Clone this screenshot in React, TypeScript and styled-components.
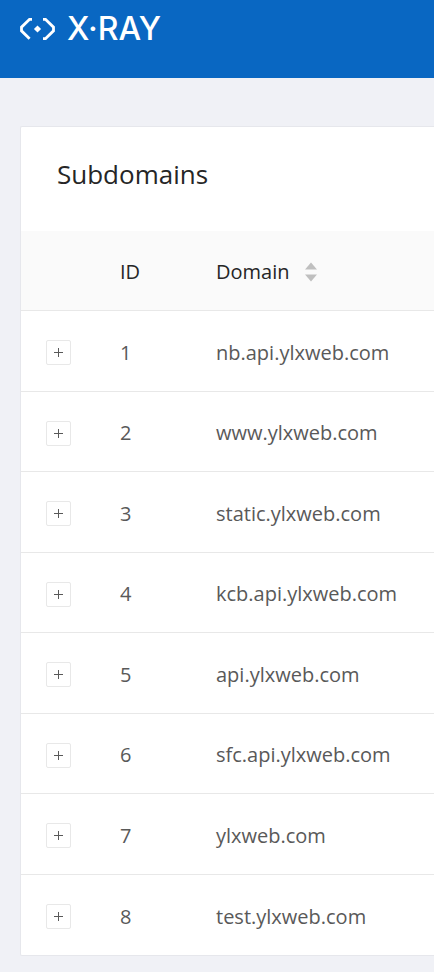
import React, { useState } from "react";
import styled, { createGlobalStyle } from "styled-components";

const GlobalStyle = createGlobalStyle`
  *, *::before, *::after { box-sizing: border-box; }
  body {
    margin: 0;
    background: #f0f1f6;
    color: #595959;
    font-family: "Open Sans", "Noto Sans", sans-serif;
    font-size: 20px;
  }
`;

const Page = styled.div`
  min-height: 100vh;
  overflow-x: hidden;
`;

const TopBar = styled.header`
  height: 78px;
  padding: 12px 20px;
  background: #0967c2;
`;

const Brand = styled.a`
  display: inline-flex;
  align-items: center;
  gap: 12px;
  height: 34px;
  color: #fff;
  text-decoration: none;
`;

const BrandMark = styled.svg`
  display: block;
  width: 35px;
  height: 22px;
`;

const BrandName = styled.span`
  font-family: Inter, "DejaVu Sans", sans-serif;
  font-size: 32px;
  font-weight: 500;
  line-height: 32px;
`;

const Main = styled.main`
  padding: 48px 0 18px 20px;
`;

const Card = styled.section`
  overflow: hidden;
  background: #fff;
  border: 1px solid #e6e7ec;
  border-right: 0;
  border-radius: 2px 0 0 2px;
`;

const Title = styled.h1`
  margin: 0;
  padding: 29px 36px 39px;
  color: #262626;
  font-size: 26px;
  font-weight: 400;
  line-height: 36px;
`;

const Table = styled.table`
  width: 100%;
  border-collapse: separate;
  border-spacing: 0;
  table-layout: fixed;
`;

const Column = styled.col<{ $width?: number }>`
  width: ${({ $width }) => ($width ? `${$width}px` : "auto")};
`;

const HeadCell = styled.th`
  height: 80px;
  padding: 2px 0 0 24px;
  background: #fafafa;
  border-bottom: 1px solid #e8e8e8;
  color: #262626;
  font-weight: 400;
  line-height: 30px;
  text-align: left;
`;

const Row = styled.tr`
  height: 80px;

  &:nth-child(odd) { height: 81px; }
`;

const Cell = styled.td`
  padding: 3px 0 0 24px;
  border-bottom: 1px solid #e8e8e8;
  line-height: 30px;
  white-space: nowrap;

  &:first-child { padding-left: 25px; }

  ${Row}:last-child & { border-bottom: 0; }
`;

const SortButton = styled.button`
  display: inline-flex;
  align-items: center;
  gap: 15px;
  padding: 0;
  border: 0;
  background: none;
  color: inherit;
  font: inherit;
  line-height: 30px;
  cursor: pointer;
`;

const SortArrows = styled.svg`
  display: block;
  width: 12px;
  height: 20px;
  fill: #bfbfbf;
`;

const ExpandButton = styled.button`
  display: grid;
  place-items: center;
  width: 25px;
  height: 25px;
  padding: 0;
  border: 1px solid #e8e8e8;
  border-radius: 2px;
  background: #fff;
  color: #595959;
  cursor: pointer;
`;

const ExpandIcon = styled.svg`
  display: block;
  width: 9px;
  height: 9px;
  fill: currentColor;
`;

const names = [
  "nb.api.ylxweb.com",
  "www.ylxweb.com",
  "static.ylxweb.com",
  "kcb.api.ylxweb.com",
  "api.ylxweb.com",
  "sfc.api.ylxweb.com",
  "ylxweb.com",
  "test.ylxweb.com",
];
const domains = names.map((name, index) => ({ id: index + 1, name }));

type Order = "none" | "ascending" | "descending";
const nextOrder: Record<Order, Order> = {
  none: "ascending",
  ascending: "descending",
  descending: "none",
};

export default function App() {
  const [order, setOrder] = useState<Order>("none");
  const [open, setOpen] = useState<number[]>([]);

  const rows = [...domains];
  if (order !== "none") {
    rows.sort((a, b) => a.name.localeCompare(b.name) * (order === "ascending" ? 1 : -1));
  }
  const toggle = (id: number) =>
    setOpen((ids) => (ids.includes(id) ? ids.filter((x) => x !== id) : [...ids, id]));

  return (
    <Page>
      <GlobalStyle />
      <TopBar>
        <Brand href="#">
          <BrandMark viewBox="0 0 35 22" aria-hidden="true">
            <g fill="none" stroke="#fff" strokeWidth="2.8">
              <path d="M12 1.3H9.6L1.5 9.2V12.8L9.6 20.7" />
              <path d="M23 1.3H25.4L33.5 9.2V12.8L25.4 20.7H23" />
            </g>
            <path d="M17.5 7.4L21.1 11L17.5 14.6L13.9 11Z" fill="#fff" />
          </BrandMark>
          <BrandName>X·RAY</BrandName>
        </Brand>
      </TopBar>
      <Main>
        <Card>
          <Title>Subdomains</Title>
          <Table>
            <colgroup>
              <Column $width={75} />
              <Column $width={96} />
              <Column />
            </colgroup>
            <thead>
              <tr>
                <HeadCell aria-label="Expand" />
                <HeadCell scope="col">ID</HeadCell>
                <HeadCell scope="col" aria-sort={order}>
                  <SortButton type="button" onClick={() => setOrder(nextOrder[order])}>
                    Domain
                    <SortArrows viewBox="0 0 12 20" aria-hidden="true">
                      <path d="M6 0.5L12 7.5H0Z" />
                      <path d="M0 12.5H12L6 19.5Z" />
                    </SortArrows>
                  </SortButton>
                </HeadCell>
              </tr>
            </thead>
            <tbody>
              {rows.map(({ id, name }) => (
                <Row key={id}>
                  <Cell>
                    <ExpandButton
                      type="button"
                      aria-label={`Details of ${name}`}
                      aria-expanded={open.includes(id)}
                      onClick={() => toggle(id)}
                    >
                      <ExpandIcon viewBox="0 0 9 9" aria-hidden="true">
                        <path d={open.includes(id) ? "M0 4H9V5H0Z" : "M0 4H4V0H5V4H9V5H5V9H4V5H0Z"} />
                      </ExpandIcon>
                    </ExpandButton>
                  </Cell>
                  <Cell>{id}</Cell>
                  <Cell>{name}</Cell>
                </Row>
              ))}
            </tbody>
          </Table>
        </Card>
      </Main>
    </Page>
  );
}
